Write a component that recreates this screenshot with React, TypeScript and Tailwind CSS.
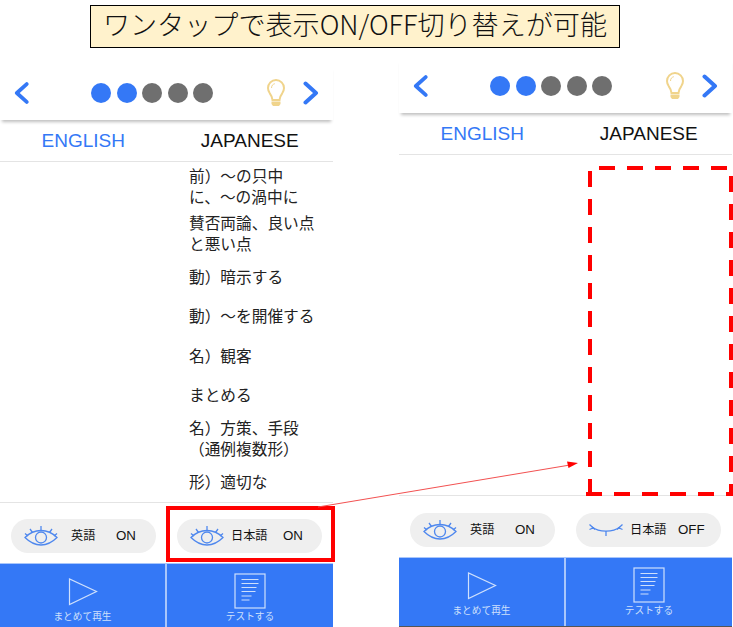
import React from "react";

const JP = { fontFamily: '"Liberation Sans","Noto Sans CJK JP",sans-serif' };
const BANNER = { fontFamily: '"Noto Sans CJK JP","Noto Sans",sans-serif' };

function Chevron({ dir }: { dir: "l" | "r" }) {
  return (
    <svg width="16" height="24" viewBox="0 0 16 24" fill="none" stroke="#3478f6" strokeWidth="4" strokeLinecap="round" strokeLinejoin="round">
      <path d={dir === "l" ? "M13.5 2.5 3 12l10.5 9.5" : "M2.5 2.5 13 12 2.5 21.5"} />
    </svg>
  );
}

function Bulb() {
  return (
    <svg width="18" height="27" viewBox="0 0 18 27" fill="none" stroke="#f0d48c" strokeWidth="2">
      <path d="M5.500 21c-.2-3-.9-4.300-2.700-6.700C1.700 12.700 1 11 1 9a8 8 0 0 1 16 0c0 2-.7 3.700-1.800 5.300-1.800 2.400-2.500 3.700-2.700 6.700z" />
      <path d="M4.500 9c0-2.400 1.300-3.800 3.300-4.300" strokeWidth="1" />
      <path d="M4.500 22.500h9v2.500l-1.500 2H6l-1.500-2z" fill="#f0d48c" stroke="none" />
    </svg>
  );
}

function Eye({ open }: { open: boolean }) {
  return (
    <svg width="34" height="21" viewBox="0 0 34 21" fill="none" stroke="#4f88ee" strokeWidth="1.300" className="shrink-0">
      {open ? (
        <>
          <path d="M1 11.500C6 6.500 11 4.500 17 4.500s11 2 16 7c-5 5-10 7.500-16 7.500S6 16.500 1 11.500z" />
          <circle cx="17" cy="11.500" r="5.500" />
          <path d="M17 0v4.500M6 3l2.500 3.500M28 3l-2.500 3.500M1 7.500l3 2.500M33 7.500l-3 2.500" />
        </>
      ) : (
        <>
          <path d="M3 7C10 12.500 24 12.500 31 7" />
          <path d="M.5 4.500 6 9.500M.5 9.500 5 7.500M33.500 4.500 28 9.500M33.500 9.500 29 7.500M17 11v5" />
        </>
      )}
    </svg>
  );
}

function Toggle({ lang, state, wide, open }: { lang: string; state: string; wide: boolean; open: boolean }) {
  return (
    <div className="flex h-[34px] w-[145px] items-center rounded-full bg-[#efefef] pl-[13px] text-[#111]">
      <Eye open={open} />
      <span className={wide ? "ml-[7px] w-[36px] text-[12.2px] whitespace-nowrap" : "ml-[13px] w-[25px] text-[12.2px] whitespace-nowrap"}>{lang}</span>
      <span className={state === "OFF" ? "ml-[12px] text-[13.3px]" : wide ? "ml-[16px] text-[13.3px]" : "ml-[20px] text-[13.3px]"}>{state}</span>
    </div>
  );
}

const rows = [
  ["前）～の只中", "に、～の渦中に"],
  ["賛否両論、良い点", "と悪い点"],
  ["動）暗示する"],
  ["動）～を開催する"],
  ["名）観客"],
  ["まとめる"],
  ["名）方策、手段", "（通例複数形）"],
  ["形）適切な"],
];

function Phone({ off, margin, toggleRow, footH, dark }: { off: boolean; margin: string; toggleRow: string; footH: string; dark: boolean }) {
  return (
    <div className={`flex w-[333px] shrink-0 flex-col ${margin}`}>
      <div className="relative z-10 flex h-[55px] items-center bg-white pl-[14px] pr-[14px] shadow-[0_4px_3px_-2px_rgba(0,0,0,0.25)]">
        <Chevron dir="l" />
        <div className="ml-[62px] flex gap-[5.600px]">
          {[0, 1, 2, 3, 4].map((i) => (
            <div key={i} className={i < 2 ? "h-[20px] w-[20px] rounded-full bg-[#3478f6]" : "h-[20px] w-[20px] rounded-full bg-[#6f6f6f]"} />
          ))}
        </div>
        <div className="ml-[53.600px]"><Bulb /></div>
        <div className="ml-[18px]"><Chevron dir="r" /></div>
      </div>
      <div className="grid h-[42px] grid-cols-2 items-center border-b border-[#e4e4e4] pt-[2px] text-center text-[19px]">
        <span className="text-[#3478f6]">ENGLISH</span>
        <span className="text-[#111]">JAPANESE</span>
      </div>
      <div className="h-[341px] border-b border-[#e4e4e4] pt-[1.500px]">
        {!off && (
          <div className="ml-[189px] w-[135px] text-[15.700px] leading-[21.500px] text-[#222]">
            {rows.map((r, i) => (
              <div key={i} className={r.length === 2 ? "flex h-[47px] flex-col justify-center whitespace-nowrap" : "flex h-[39.500px] flex-col justify-center whitespace-nowrap"}>
                {r.map((l) => <div key={l}>{l}</div>)}
              </div>
            ))}
          </div>
        )}
      </div>
      <div className={`flex items-center gap-[21px] pl-[11px] ${toggleRow}`}>
        <Toggle lang="英語" state="ON" wide={false} open />
        <Toggle lang="日本語" state={off ? "OFF" : "ON"} wide open={!off} />
      </div>
      <div className={`grid ${footH} grid-cols-[167px_1fr] border-t border-[#a9c6fb] bg-[#3478f6] text-[9.700px] text-[#cfe0fc] ${dark ? "border-b border-b-[#555]" : ""}`}>
        <div className="flex flex-col items-center border-r-2 border-[#a9c6fb] pt-[13px]">
          <svg width="30" height="30" viewBox="0 0 30 30" fill="none" stroke="#cfe0fc" strokeWidth="1.200">
            <path d="M1.500 2v25.500L28.500 14.500z" />
          </svg>
          <span className="mt-[3px] whitespace-nowrap">まとめて再生</span>
        </div>
        <div className="flex flex-col items-center pt-[9px]">
          <svg width="32" height="36" viewBox="0 0 32 36" fill="none" stroke="#cfe0fc" strokeWidth="1.200">
            <rect x="1" y="1" width="30" height="34" />
            <path d="M7.500 6.500h17M7.500 10.500h17M7.500 14.500h15M7.500 18.500h14M7.500 23h10M7.500 27h8" />
          </svg>
          <span className="mt-[1px] whitespace-nowrap">テストする</span>
        </div>
      </div>
    </div>
  );
}

export default function App() {
  return (
    <div className="relative h-[627px] w-[733px] overflow-hidden bg-white" style={JP}>
      <div className="pt-[5px]">
        <div className="ml-[90px] flex h-[43px] w-[530px] items-center justify-center border border-black bg-[#fff2cc] pb-[5px] text-[27.100px] font-light text-[#111] whitespace-nowrap" style={BANNER}>
          ワンタップで表示ON/OFF切り替えが可能
        </div>
      </div>
      <div className="flex items-start gap-[66px]">
        <Phone off={false} margin="mt-[17px]" toggleRow="h-[60px] pt-[6px]" footH="h-[64px]" dark={false} />
        <Phone off margin="mt-[10px]" toggleRow="h-[61px] pt-[7px]" footH="h-[70px]" dark />
      </div>
      <div className="absolute left-[166px] top-[506px] h-[56px] w-[169px] border-[4px] border-[#ff0000]" />
      <svg className="absolute left-0 top-0" width="733" height="627" fill="none">
        <path d="M318 507 570 465" stroke="#f25050" strokeWidth="1" />
        <path d="M578 463 567 461.500 568.500 468z" fill="#ff0000" />
        <g stroke="#ff0000" strokeWidth="4" strokeDasharray="16 12">
          <path d="M599 168H733" />
          <path d="M590 171V496" />
          <path d="M586 494H733" />
          <path d="M731 176V496" />
        </g>
      </svg>
    </div>
  );
}
